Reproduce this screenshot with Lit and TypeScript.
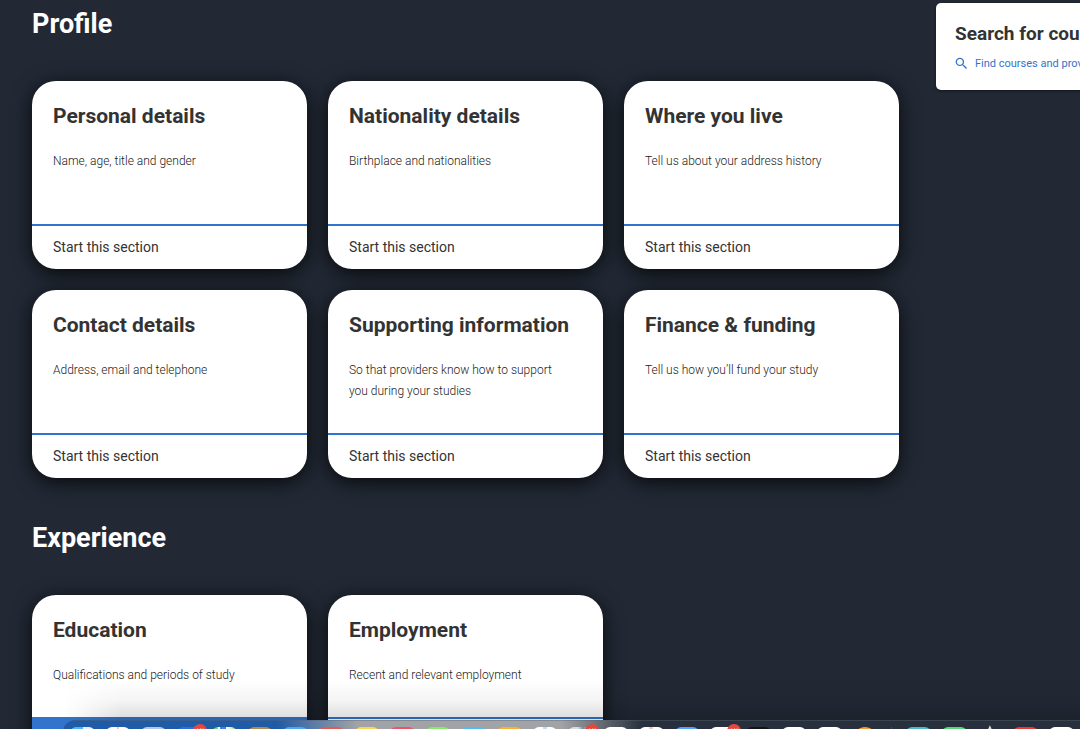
import { LitElement, html, css, svg, nothing } from "lit";
import { customElement, property } from "lit/decorators.js";
import { classMap } from "lit/directives/class-map.js";
import { styleMap } from "lit/directives/style-map.js";

interface CardInfo {
  title: string;
  text: string;
  active?: boolean;
}

const sections: { title: string; cards: CardInfo[] }[] = [
  {
    title: "Profile",
    cards: [
      { title: "Personal details", text: "Name, age, title and gender" },
      { title: "Nationality details", text: "Birthplace and nationalities" },
      { title: "Where you live", text: "Tell us about your address history" },
      { title: "Contact details", text: "Address, email and telephone" },
      { title: "Supporting information", text: "So that providers know how to support you during your studies" },
      { title: "Finance & funding", text: "Tell us how you’ll fund your study" },
    ],
  },
  {
    title: "Experience",
    cards: [
      { title: "Education", text: "Qualifications and periods of study", active: true },
      { title: "Employment", text: "Recent and relevant employment" },
    ],
  },
];

@customElement("section-card")
class SectionCard extends LitElement {
  @property() heading = "";
  @property() text = "";
  @property({ type: Boolean }) active = false;

  static styles = css`
    :host {
      display: flex;
    }
    .card {
      flex: 1;
      display: flex;
      flex-direction: column;
      border-radius: 24px;
      overflow: hidden;
      background: #fff;
      box-shadow: 0 4px 20px rgba(0, 0, 0, 0.8);
    }
    .body {
      flex: 1;
      padding: 21px 21px 31px;
    }
    .title {
      margin: 0 0 21px;
      font-size: 21px;
      line-height: 28px;
      font-weight: 700;
      color: #333;
    }
    .text {
      max-width: 216px;
      margin: 0;
      font-size: 12px;
      line-height: 21px;
      font-weight: 300;
      color: #222;
    }
    .start {
      padding: 11px 21px;
      border-top: 2px solid #3274cb;
      font-size: 14px;
      line-height: 21px;
      color: #333;
      text-decoration: none;
    }
    .active {
      background: #3274cb;
      color: #fff;
    }
  `;

  render() {
    return html`<article class="card">
      <div class="body">
        <h3 class="title">${this.heading}</h3>
        <p class="text">${this.text}</p>
      </div>
      <a class=${classMap({ start: true, active: this.active })} href="#">Start this section</a>
    </article>`;
  }
}

interface DockItem {
  fill: string;
  badge?: boolean;
  shape?: "circle" | "spike";
}

const apps: DockItem[] = [
  { fill: "linear-gradient(90deg, #45b8f5 50%, #e8edf3 50%)" },
  { fill: "linear-gradient(90deg, #fff 44%, #f5c58f 44%, #f5c58f 56%, #fff 56%)" },
  { fill: "#b4c8e6" },
  { fill: "#2c6ceb", badge: true },
  { fill: "linear-gradient(90deg, #7bd86f 25%, #fff 25%, #fff 32%, #3f80ee 32%, #3f80ee 55%, #fff 55%, #d9ecd2 75%, #7bd86f)" },
  { fill: "#b58a45" },
  { fill: "#47aaf0" },
  { fill: "#ea594b" },
  { fill: "#fbd751" },
  { fill: "#ee5368" },
  { fill: "#86ed62" },
  { fill: "#4fbcf7" },
  { fill: "#fbb034" },
  { fill: "linear-gradient(90deg, #fff 42%, #c5dcf0 42%, #c5dcf0 58%, #fff 58%)" },
  { fill: "linear-gradient(90deg, #d4dde2 40%, #7e878d 60%, #d4dde2)", badge: true },
  { fill: "#fff" },
  { fill: "linear-gradient(90deg, #fff 42%, #f3c3c0 42%, #f3c3c0 58%, #fff 58%)" },
  { fill: "#559ff6" },
  { fill: "#fff", badge: true },
  { fill: "#151414" },
  { fill: "#fff" },
  { fill: "#fff" },
  { fill: "#ef9a35", shape: "circle" },
];

const extras: DockItem[] = [
  { fill: "linear-gradient(90deg, #4cb8cb 80%, #4597c9)" },
  { fill: "#56d972" },
  { fill: "#dcd9d3", shape: "spike" },
  { fill: "#ea3735" },
  { fill: "#fff" },
];

@customElement("app-dock")
class AppDock extends LitElement {
  static styles = css`
    :host {
      display: block;
      height: 9px;
    }
    .dock {
      display: flex;
      gap: 14px;
      height: 40px;
      padding: 6px 6px 0 7px;
      border-top: 1px solid rgba(90, 100, 112, 0.4);
      border-top-left-radius: 12px;
      background: linear-gradient(90deg, #1f5ba7 0, #1f5ba7 21%, #a2a3a6 29%, #a2a3a6 49%, #27303c 57%, #27303c 100%);
    }
    .apps,
    .extras {
      display: flex;
      gap: 11px;
      min-width: 0;
    }
    .apps {
      flex: 808;
    }
    .extras {
      flex: 168;
    }
    .divider {
      width: 1px;
      background: #46505c;
    }
    .item {
      position: relative;
      flex: 1;
    }
    .tile {
      height: 25px;
      border-radius: 6px;
    }
    .circle {
      border-radius: 50%;
    }
    .spike {
      display: block;
      width: 100%;
      height: 25px;
    }
    .badge {
      position: absolute;
      top: -3px;
      right: -6px;
      width: 14px;
      height: 14px;
    }
  `;

  item(d: DockItem) {
    return html`<div class="item">
      ${d.shape === "spike"
        ? html`<svg class="spike" viewBox="0 0 25 25" overflow="visible">
            <path d="M12 -2 L13.5 1.5 L22 22 H2 L10.5 1.5Z" fill=${d.fill} />
          </svg>`
        : html`<div
            class=${classMap({ tile: true, circle: d.shape === "circle" })}
            style=${styleMap({ background: d.fill })}
          ></div>`}
      ${d.badge
        ? html`<svg class="badge" viewBox="0 0 14 14">
            <circle cx="7" cy="7" r="7" fill="#e8463c" />
            ${svg`<path d="M4.5 4.5v4M7.5 4.5v4M10 4.5v4" stroke="#fbd9d6" stroke-width="1" />`}
          </svg>`
        : nothing}
    </div>`;
  }

  render() {
    return html`<div class="dock">
      <div class="apps">${apps.map((d) => this.item(d))}</div>
      <div class="divider"></div>
      <div class="extras">${extras.map((d) => this.item(d))}</div>
    </div>`;
  }
}

@customElement("app-root")
class AppRoot extends LitElement {
  static styles = css`
    :host {
      display: block;
      height: 100vh;
      overflow: hidden;
      background: #222935;
      font-family: Roboto, "Liberation Sans", sans-serif;
    }
    .page {
      display: flex;
      align-items: flex-start;
      gap: 37px;
      padding: 0 32px;
    }
    .main {
      flex: none;
      display: flex;
      flex-direction: column;
      gap: 44px;
      padding-top: 8px;
    }
    .heading {
      margin: 0 0 41px;
      font-size: 27px;
      line-height: 32px;
      font-weight: 700;
      color: #fff;
    }
    .cards {
      display: grid;
      grid-template-columns: repeat(3, 275px);
      grid-auto-rows: 1fr;
      gap: 21px;
    }
    .search {
      flex: none;
      width: 275px;
      box-sizing: border-box;
      margin-top: 3px;
      padding: 19px 19px 18px;
      border-radius: 5px;
      background: #fff;
      box-shadow: 0 1px 3px rgba(0, 0, 0, 0.5);
      white-space: nowrap;
    }
    .search-title {
      margin: 0 0 9px;
      font-size: 19px;
      line-height: 24px;
      font-weight: 700;
      color: #333;
    }
    .find {
      display: flex;
      align-items: center;
      gap: 7px;
      font-size: 11px;
      line-height: 17px;
      color: #3274cb;
      text-decoration: none;
    }
    .icon {
      width: 13px;
      height: 13px;
      fill: currentColor;
    }
    .overlay {
      position: fixed;
      left: 0;
      right: 0;
      bottom: 0;
      padding-left: 63px;
    }
    .shade {
      height: 40px;
      background: linear-gradient(rgba(0, 0, 0, 0), rgba(0, 0, 0, 0.04) 50%, rgba(0, 0, 0, 0.14));
      mask-image: linear-gradient(90deg, transparent, #000 60px);
    }
  `;

  render() {
    return html`
      <div class="page">
        <main class="main">
          ${sections.map(
            (s) => html`<section>
              <h2 class="heading">${s.title}</h2>
              <div class="cards">
                ${s.cards.map(
                  (c) => html`<section-card .heading=${c.title} .text=${c.text} .active=${!!c.active}></section-card>`
                )}
              </div>
            </section>`
          )}
        </main>
        <aside class="search">
          <h3 class="search-title">Search for courses</h3>
          <a class="find" href="#">
            <svg class="icon" viewBox="2 2 20 20" aria-hidden="true">
              <path
                d="M15.5 14h-.79l-.28-.27A6.47 6.47 0 0 0 16 9.5 6.5 6.5 0 1 0 9.5 16c1.61 0 3.09-.59 4.23-1.57l.27.28v.79l5 4.99L20.49 19l-4.99-5zm-6 0C7.01 14 5 11.99 5 9.5S7.01 5 9.5 5 14 7.01 14 9.5 11.99 14 9.5 14z"
              />
            </svg>
            Find courses and providers
          </a>
        </aside>
      </div>
      <div class="overlay">
        <div class="shade"></div>
        <app-dock></app-dock>
      </div>
    `;
  }
}
